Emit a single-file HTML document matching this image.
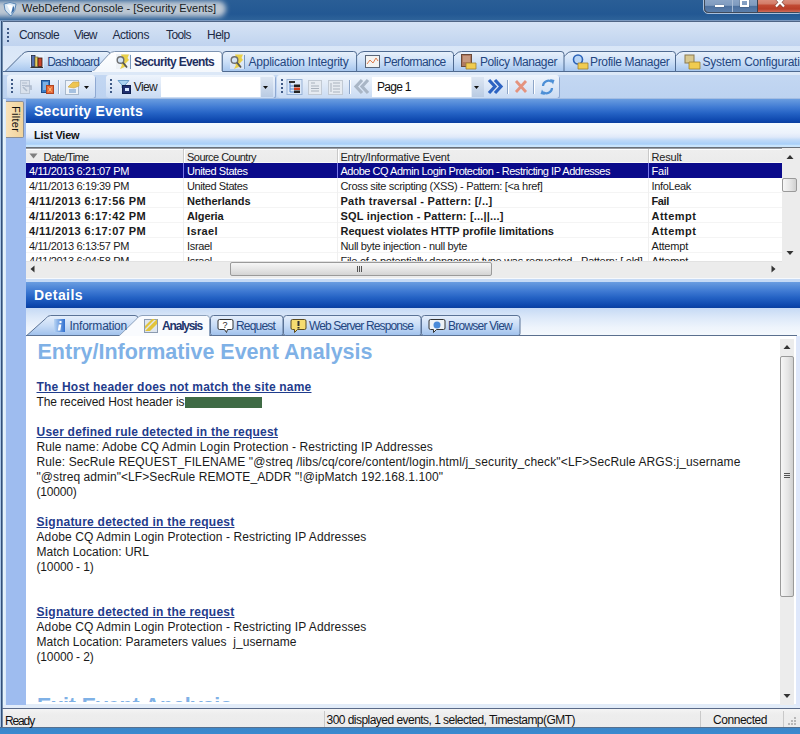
<!DOCTYPE html><html><head><meta charset='utf-8'><style>
*{box-sizing:border-box;margin:0;padding:0}
html,body{width:800px;height:734px;overflow:hidden;background:#c2d5f0;font-family:"Liberation Sans",sans-serif;position:relative}
.a{position:absolute}
.t{position:absolute;white-space:pre;line-height:1}
.grip{width:2px;background:repeating-linear-gradient(#3f5a86 0 2px,transparent 2px 4px)}
</style></head><body>
<div class="a" style="left:0;top:0;width:800px;height:20px;background:linear-gradient(#2a5e96,#235893 70%,#2d6299)"></div>
<div class="a" style="left:-12px;top:1px;width:238px;height:16px;border-radius:8px;background:#bcc7d3;filter:blur(2.5px)"></div>
<svg class="a" style="left:2px;top:1px" width="16" height="16" viewBox="0 0 16 16"><path d="M2 3 Q8 0 14 3 Q14 10 9 15 Q6 13 3 9 Z" fill="#d9e8f5" stroke="#5a86b5" stroke-width="1"/><path d="M5 4 Q8 3 11 5 L9 12 Z" fill="#ffffff"/><path d="M11 5 Q13 6 12 10 L9 13 Z" fill="#3d6ea8"/></svg>
<div class="t" style="left:22px;top:3px;font-size:11px;font-weight:normal;color:#151a22;letter-spacing:0.010px">WebDefend Console - [Security Events]</div>
<div class="a" style="left:703px;top:-3px;width:100px;height:17px;border:1px solid #a9c0dc;border-radius:0 0 5px 5px;background:#3f4a5a"></div>
<div class="a" style="left:705px;top:0;width:28px;height:12px;background:linear-gradient(#8aa4c6 0%,#7f9bbf 45%,#4d709e 50%,#5a7eab 100%);border-right:1px solid #a9bcd6;border-radius:0 0 0 4px"></div>
<div class="a" style="left:715px;top:5px;width:9px;height:2px;background:#fff;box-shadow:0 0 1px #333"></div>
<div class="a" style="left:733px;top:0;width:24px;height:12px;background:linear-gradient(#8aa4c6 0%,#7f9bbf 45%,#4d709e 50%,#5a7eab 100%)"></div>
<div class="a" style="left:740px;top:-2px;width:9px;height:9px;border:2px solid #fff;border-top-width:3px;box-shadow:0 0 1px #333"></div>
<div class="a" style="left:757px;top:0;width:43px;height:12px;background:linear-gradient(#da8c7a 0%,#d27a66 35%,#c24c35 40%,#b93e28 75%,#cf6e5c 100%);border-left:1px solid #3a4454"></div>
<svg class="a" style="left:774px;top:-2px" width="12" height="10"><path d="M2 0 L10 8.5 M10 0 L2 8.5" stroke="#3a2a2a" stroke-width="3.6" opacity="0.45"/><path d="M2 0 L10 8.5 M10 0 L2 8.5" stroke="#fff" stroke-width="2.2"/></svg>
<div class="a" style="left:0;top:20px;width:800px;height:1px;background:#7c99bf"></div>
<div class="a" style="left:0;top:21px;width:800px;height:1px;background:#4f6585"></div>
<div class="a" style="left:3px;top:22px;width:797px;height:24px;background:linear-gradient(#d6e3f5,#c9daf1 60%,#c0d3ef)"></div>
<div class="a" style="left:3px;top:46px;width:797px;height:26px;background:linear-gradient(#d9e6f7,#dfeaf8)"></div>
<div class="a grip" style="left:7px;top:28px;height:14px"></div>
<div class="t" style="left:19px;top:29px;font-size:12px;font-weight:normal;color:#1e2b45;letter-spacing:-0.576px">Console</div>
<div class="t" style="left:74px;top:29px;font-size:12px;font-weight:normal;color:#1e2b45;letter-spacing:-0.774px">View</div>
<div class="t" style="left:112.4px;top:29px;font-size:12px;font-weight:normal;color:#1e2b45;letter-spacing:-0.394px">Actions</div>
<div class="t" style="left:166px;top:29px;font-size:12px;font-weight:normal;color:#1e2b45;letter-spacing:-0.603px">Tools</div>
<div class="t" style="left:207px;top:29px;font-size:12px;font-weight:normal;color:#1e2b45;letter-spacing:-0.522px">Help</div>
<svg class="a" style="left:0;top:0" width="800" height="100"><defs><linearGradient id="tg" x1="0" y1="0" x2="0" y2="1"><stop offset="0" stop-color="#e9f1fb"/><stop offset="0.5" stop-color="#cde0f7"/><stop offset="1" stop-color="#a6c6ee"/></linearGradient><linearGradient id="tsel" x1="0" y1="0" x2="0" y2="1"><stop offset="0" stop-color="#ffffff"/><stop offset="1" stop-color="#f3f7fc"/></linearGradient></defs><rect x="3" y="71" width="797" height="1" fill="#4f6c96"/><path d="M660,71.5 L677,54.5 Q679.5,51.5 683,51.5 L827,51.5 Q830,51.5 830,54.5 L830,71.5 Z" fill="url(#tg)" stroke="#4f6a90" stroke-width="1"/><path d="M549,71.5 L566,54.5 Q568.5,51.5 572,51.5 L672.5,51.5 Q675.5,51.5 675.5,54.5 L675.5,71.5 Z" fill="url(#tg)" stroke="#4f6a90" stroke-width="1"/><path d="M438.5,71.5 L455.5,54.5 Q458.0,51.5 461.5,51.5 L561,51.5 Q564,51.5 564,54.5 L564,71.5 Z" fill="url(#tg)" stroke="#4f6a90" stroke-width="1"/><path d="M341,71.5 L358,54.5 Q360.5,51.5 364,51.5 L450.5,51.5 Q453.5,51.5 453.5,54.5 L453.5,71.5 Z" fill="url(#tg)" stroke="#4f6a90" stroke-width="1"/><path d="M222.5,71.5 L222.5,55 Q222.5,51.5 226,51.5 L353.6,51.5 Q356.6,51.5 356.6,54.5 L356.6,71.5 Z" fill="url(#tg)" stroke="#4f6a90" stroke-width="1"/><path d="M5,71.5 L22,54.5 Q24.5,51.5 28,51.5 L107,51.5 Q110,51.5 110,54.5 L110,71.5 Z" fill="url(#tg)" stroke="#4f6a90" stroke-width="1"/><path d="M91.6,73 L108.6,54.5 Q111.1,51.5 114.6,51.5 L219,51.5 Q222,51.5 222,54.5 L222,73 Z" fill="url(#tsel)" stroke="none"/><path d="M91.6,73 L108.6,54.5 Q111.1,51.5 114.6,51.5 L219,51.5 Q222,51.5 222,54.5 L222,73" fill="none" stroke="#7d93b1" stroke-width="1"/><rect x="92" y="71" width="130" height="2" fill="#f5f8fc"/></svg>
<div class="t" style="left:47.2px;top:56px;font-size:12px;font-weight:normal;color:#24467f;letter-spacing:-0.747px">Dashboard</div>
<div class="t" style="left:134px;top:56px;font-size:12px;font-weight:bold;color:#1f2f5f;letter-spacing:-0.670px">Security Events</div>
<div class="t" style="left:248.5px;top:56px;font-size:12px;font-weight:normal;color:#24467f;letter-spacing:-0.225px">Application Integrity</div>
<div class="t" style="left:383.6px;top:56px;font-size:12px;font-weight:normal;color:#24467f;letter-spacing:-0.609px">Performance</div>
<div class="t" style="left:480px;top:56px;font-size:12px;font-weight:normal;color:#24467f;letter-spacing:-0.408px">Policy Manager</div>
<div class="t" style="left:590px;top:56px;font-size:12px;font-weight:normal;color:#24467f;letter-spacing:-0.348px">Profile Manager</div>
<div class="t" style="left:702.5px;top:56px;font-size:12px;font-weight:normal;color:#24467f;letter-spacing:-0.237px">System Configuration</div>
<div class="a" style="left:3px;top:72px;width:797px;height:27px;background:linear-gradient(#dce8f7 0,#dce8f7 3px,#c3d7f2 3px,#bcd2f0)"></div>
<div class="a" style="left:7px;top:75px;width:87.5px;height:23px;border-radius:3px;background:linear-gradient(#eef4fc,#dde8f7 50%,#c9dbf3);box-shadow:1px 1px 0 #8fa9d2"></div>
<div class="a" style="left:106px;top:75px;width:169px;height:23px;border-radius:3px;background:linear-gradient(#eef4fc,#dde8f7 50%,#c9dbf3);box-shadow:1px 1px 0 #8fa9d2"></div>
<div class="a" style="left:276.6px;top:75px;width:282.4px;height:23px;border-radius:3px;background:linear-gradient(#eef4fc,#dde8f7 50%,#c9dbf3);box-shadow:1px 1px 0 #8fa9d2"></div>
<div class="a grip" style="left:11px;top:79px;height:14px"></div>
<div class="a grip" style="left:109.7px;top:79px;height:14px"></div>
<div class="a grip" style="left:280.5px;top:79px;height:14px"></div>
<div class="a" style="left:161px;top:77px;width:112px;height:20px;background:#fff"></div>
<div class="a" style="left:260px;top:77px;width:13px;height:20px;background:linear-gradient(#dde6f2,#b9cbe3);border-left:1px solid #e6edf6"></div>
<svg class="a" style="left:263px;top:86px" width="6" height="4"><path d="M0 0 L5 0 L2.5 3 Z" fill="#111"/></svg>
<div class="a" style="left:372px;top:77px;width:112px;height:20px;background:#fff"></div>
<div class="a" style="left:471px;top:77px;width:13px;height:20px;background:linear-gradient(#dde6f2,#b9cbe3);border-left:1px solid #e6edf6"></div>
<svg class="a" style="left:474px;top:86px" width="6" height="4"><path d="M0 0 L5 0 L2.5 3 Z" fill="#111"/></svg>
<div class="t" style="left:133.75px;top:81px;font-size:12px;font-weight:normal;color:#222;letter-spacing:-0.637px">View</div>
<div class="t" style="left:377px;top:81px;font-size:12px;font-weight:normal;color:#111;letter-spacing:-0.724px">Page 1</div>
<div class="a" style="left:58.0px;top:80px;width:1px;height:14px;background:#8ea6c8;box-shadow:1px 0 0 #fff"></div>
<div class="a" style="left:348.5px;top:80px;width:1px;height:14px;background:#8ea6c8;box-shadow:1px 0 0 #fff"></div>
<div class="a" style="left:507.0px;top:80px;width:1px;height:14px;background:#8ea6c8;box-shadow:1px 0 0 #fff"></div>
<div class="a" style="left:533.0px;top:80px;width:1px;height:14px;background:#8ea6c8;box-shadow:1px 0 0 #fff"></div>
<svg class="a" style="left:0;top:0" width="800" height="100">
<!-- icon1 disabled -->
<rect x="20.5" y="80.5" width="9" height="13" fill="#d9e1ec" stroke="#b9c5d5"/>
<path d="M22 83 H27 M22 85.5 H25" stroke="#b0bccc"/>
<path d="M23 87 L27 91 M25 86 L31 86 L31 90" fill="none" stroke="#aebbcc" stroke-width="1.6"/>
<!-- icon2 -->
<rect x="41.5" y="80.5" width="8" height="12" fill="#3a7fc8" stroke="#1f4f8f"/>
<path d="M43 83 H48 M43 85 H48 M43 87 H48 M43 89 H48" stroke="#bfe0ff" stroke-width="1"/>
<rect x="46.5" y="85.5" width="7" height="8" fill="#e86a3a" stroke="#b04520"/>
<path d="M48.5 87.5 L51.5 91.5 M51.5 87.5 L48.5 91.5" stroke="#ffd080" stroke-width="1"/>
<!-- icon3 -->
<rect x="65.5" y="80.5" width="13" height="14" fill="#eef3f9" stroke="#a9b9cc"/>
<path d="M69 90 H76 M69 92 H76" stroke="#5f8fc8" stroke-width="1.2"/>
<path d="M68 87 L73 82 L79 82 L79 86 L74 88 Z" fill="#eec550" stroke="#c8a040" stroke-width="0.6"/>
<path d="M84 86 L89 86 L86.5 89 Z" fill="#111"/>
<!-- filter icon -->
<path d="M118 80.5 L129 80.5 L125 85 L125 88 L122 88 L122 85 Z" fill="#a9d2f0" stroke="#6a9cc8" stroke-width="1"/>
<rect x="122.5" y="85.5" width="8" height="8" fill="#1f2f6f" stroke="#0f1f4f"/>
<rect x="125" y="88" width="4" height="3" fill="#d8e8ff"/>
<!-- tree icon -->
<rect x="287" y="79.5" width="15" height="15" fill="#dce8f7" stroke="#98b2d6"/>
<rect x="289" y="81" width="6" height="2" fill="#333"/>
<path d="M290 83 V92 M290 86 H294 M290 89 H294 M290 92 H294" stroke="#5a8ad0" stroke-width="1"/>
<rect x="294" y="84.5" width="6" height="2.5" fill="#222"/>
<rect x="294" y="87.5" width="6" height="2.5" fill="#d04020"/>
<rect x="294" y="90.5" width="6" height="2.5" fill="#222"/>
<!-- greyed doc icons -->
<rect x="308.5" y="80.5" width="13" height="14" fill="#e6ebf1" stroke="#c2cad4"/>
<path d="M311 83 H315 M311 86 H319 M311 88.5 H319 M311 91 H319" stroke="#a9b2bd" stroke-width="1"/>
<rect x="328.5" y="80.5" width="14" height="14" fill="#e6ebf1" stroke="#c2cad4"/>
<path d="M331 83 V92 M333 83 H340 M333 86 H340 M333 89 H340 M333 92 H340" stroke="#a9b2bd" stroke-width="1"/>
<!-- << disabled -->
<path d="M362 80 L356 86.5 L362 93 M368 80 L362 86.5 L368 93" fill="none" stroke="#a9b6c6" stroke-width="3.2"/>
<!-- >> blue -->
<path d="M489 80 L495 86.5 L489 93 M495 80 L501 86.5 L495 93" fill="none" stroke="#2d63c2" stroke-width="3.2"/>
<!-- X -->
<path d="M516 81 L526 92 M526 81 L516 92" stroke="#e4937e" stroke-width="2.8"/>
<!-- refresh -->
<path d="M543 86 A5.5 5.5 0 0 1 552 82" fill="none" stroke="#4d8fd6" stroke-width="2.2"/>
<path d="M552 88 A5.5 5.5 0 0 1 543 92" fill="none" stroke="#4d8fd6" stroke-width="2.2"/>
<path d="M550 79 L554.5 80 L553 84.5 Z" fill="#4d8fd6"/>
<path d="M545 95 L540.5 94 L542 89.5 Z" fill="#4d8fd6"/>
</svg>
<svg class="a" style="left:0;top:0" width="800" height="100">
<!-- dashboard -->
<rect x="30" y="54.5" width="14" height="14" fill="#f4f7fb" opacity="0.6"/>
<rect x="31.5" y="55.5" width="3.5" height="11" fill="#5570b0" stroke="#222a40" stroke-width="0.8"/>
<rect x="35" y="57" width="3" height="9.5" fill="#e6cf5a" stroke="#665c30" stroke-width="0.6"/>
<rect x="38" y="58" width="4" height="8.5" fill="#c8452c" stroke="#3a1a10" stroke-width="0.8"/>
<path d="M30.5 67.5 H43" stroke="#333" stroke-width="1"/>
<!-- security events -->
<g transform="translate(115,54)">
<rect x="1" y="0" width="15" height="15" fill="#eef2f6"/>
<path d="M15.5 1 V15" stroke="#7a9ac0"/>
<path d="M6 0.5 L14 0.5 L12.5 4 L14 6 L10 10 L12 12 L5 15 L7 11 L5 9 L8 6 Z" fill="#e9d048"/>
<circle cx="5.5" cy="6" r="3.3" fill="#d4e4f4" stroke="#6f6f6f" stroke-width="1.4"/>
<path d="M8 8.5 L12 13.5" stroke="#555" stroke-width="1.8"/>
</g>
<!-- app integrity -->
<g transform="translate(229,54)">
<rect x="1" y="0" width="15" height="15" fill="#e8eef6" opacity="0.7"/>
<path d="M15.5 1 V15" stroke="#7a9ac0"/>
<path d="M6 0.5 L14 0.5 L12.5 4 L14 6 L10 10 L12 12 L5 15 L7 11 L5 9 L8 6 Z" fill="#e9d048"/>
<circle cx="5.5" cy="6" r="3.3" fill="#d4e4f4" stroke="#6f6f6f" stroke-width="1.4"/>
<path d="M8 8.5 L12 13.5" stroke="#555" stroke-width="1.8"/>
</g>
<!-- performance -->
<g transform="translate(365,55)">
<rect x="0.5" y="0.5" width="14" height="12" fill="#f4f4f2" stroke="#5a6678"/>
<path d="M2 9 L5 5 L8 8 L11 3 L13 6" fill="none" stroke="#e08050" stroke-width="1"/>
</g>
<!-- policy manager -->
<g transform="translate(461,54)">
<rect x="0.5" y="0.5" width="10" height="12" fill="#b07a60" stroke="#6a4a3a"/>
<path d="M2 3 H9 M2 5 H9 M2 7 H9" stroke="#e8c8b0" stroke-width="0.8"/>
<path d="M5 9 H15 V15 H5 Z" fill="#f0cc50" stroke="#a08030" stroke-width="0.8"/>
</g>
<!-- profile manager -->
<g transform="translate(572,54)">
<circle cx="6" cy="5.5" r="4.5" fill="#b8d4f4" stroke="#2a62b8" stroke-width="1.6"/>
<path d="M6 9 H16 V15 H6 Z" fill="#f0cc50" stroke="#a08030" stroke-width="0.8"/>
</g>
<!-- system config -->
<g transform="translate(684,54)">
<rect x="1" y="1" width="9" height="8" fill="#d8c890" stroke="#8a7a50"/>
<path d="M5 8 H16 V15 H5 Z" fill="#f0cc50" stroke="#a08030" stroke-width="0.8"/>
</g>
</svg>
<div class="a" style="left:3px;top:98px;width:797px;height:1px;background:#a3bde3"></div>
<div class="a" style="left:0;top:21px;width:1px;height:713px;background:#a9c6e6"></div>
<div class="a" style="left:1px;top:21px;width:1px;height:713px;background:#34507a"></div><div class="a" style="left:2px;top:21px;width:1px;height:713px;background:#6f8cab"></div>
<div class="a" style="left:3px;top:99px;width:3px;height:610px;background:linear-gradient(90deg,#e9f6fc,#dbe9f8)"></div>
<div class="a" style="left:6px;top:99px;width:20px;height:606px;background:#9ebcef"></div>
<div class="a" style="left:26px;top:99px;width:774px;height:24px;background:linear-gradient(#6a9de0 0%,#3f7ad3 35%,#2462c4 60%,#0d47ae 90%,#0a3f9f 100%)"></div>
<div class="t" style="left:34px;top:104px;font-size:14px;font-weight:bold;color:#fff;letter-spacing:0.263px">Security Events</div>
<div class="a" style="left:26px;top:123px;width:774px;height:25px;background:linear-gradient(#f4fbff 0,#ecf2fb 40%,#dfe9f9 56%,#c0daf8 68%,#a9cff8 84%,#b4d8fa 87%,#c9e4fc 90%,#c9e4fc 100%)"></div>
<div class="t" style="left:34px;top:130px;font-size:11px;font-weight:bold;color:#111;letter-spacing:-0.232px">List View</div>
<div class="a" style="left:26px;top:147px;width:774px;height:1px;background:#6a7078"></div>
<div class="a" style="left:26px;top:148px;width:774px;height:113px;background:#fff"></div>
<div class="a" style="left:26px;top:148px;width:774px;height:1px;background:#9a9ea4"></div><div class="a" style="left:26px;top:149px;width:756px;height:14px;background:linear-gradient(#ffffff 0,#ffffff 1px,#eeeeee 1px,#ebebeb 13px,#f8f8f8 13px)"></div>
<div class="a" style="left:26px;top:163px;width:756px;height:15px;background:#0a0a8a"></div>
<div class="a" style="left:26px;top:192px;width:756px;height:1px;background:#f4f4f4"></div>
<div class="a" style="left:26px;top:207px;width:756px;height:1px;background:#f4f4f4"></div>
<div class="a" style="left:26px;top:222px;width:756px;height:1px;background:#f4f4f4"></div>
<div class="a" style="left:26px;top:237px;width:756px;height:1px;background:#f4f4f4"></div>
<div class="a" style="left:26px;top:252px;width:756px;height:1px;background:#f4f4f4"></div>
<div class="a" style="left:26px;top:267px;width:756px;height:1px;background:#f4f4f4"></div>
<div class="a" style="left:182.5px;top:149px;width:1px;height:14px;background:#c9c9c9"></div>
<div class="a" style="left:183.5px;top:150px;width:1px;height:13px;background:#ffffff"></div>
<div class="a" style="left:182.5px;top:163px;width:1px;height:15px;background:#7878e8"></div>
<div class="a" style="left:182.5px;top:178px;width:1px;height:83px;background:#f0f0f0"></div>
<div class="a" style="left:337.0px;top:149px;width:1px;height:14px;background:#c9c9c9"></div>
<div class="a" style="left:338.0px;top:150px;width:1px;height:13px;background:#ffffff"></div>
<div class="a" style="left:337.0px;top:163px;width:1px;height:15px;background:#7878e8"></div>
<div class="a" style="left:337.0px;top:178px;width:1px;height:83px;background:#f0f0f0"></div>
<div class="a" style="left:648.1px;top:149px;width:1px;height:14px;background:#c9c9c9"></div>
<div class="a" style="left:649.1px;top:150px;width:1px;height:13px;background:#ffffff"></div>
<div class="a" style="left:648.1px;top:163px;width:1px;height:15px;background:#7878e8"></div>
<div class="a" style="left:648.1px;top:178px;width:1px;height:83px;background:#f0f0f0"></div>
<svg class="a" style="left:29px;top:153px" width="10" height="6"><path d="M0.5 0.5 L8.5 0.5 L4.5 5.5 Z" fill="#7f7f7f"/></svg>
<div class="t" style="left:43.6px;top:152px;font-size:11px;font-weight:normal;color:#222;letter-spacing:-0.592px">Date/Time</div>
<div class="t" style="left:187px;top:152px;font-size:11px;font-weight:normal;color:#222;letter-spacing:-0.531px">Source Country</div>
<div class="t" style="left:340.5px;top:152px;font-size:11px;font-weight:normal;color:#222;letter-spacing:-0.232px">Entry/Informative Event</div>
<div class="t" style="left:651.5px;top:152px;font-size:11px;font-weight:normal;color:#222;letter-spacing:-0.198px">Result</div>
<div class="t" style="left:29px;top:166px;font-size:11px;font-weight:normal;color:#ffffff;letter-spacing:-0.372px">4/11/2013 6:21:07 PM</div>
<div class="t" style="left:187px;top:166px;font-size:11px;font-weight:normal;color:#ffffff;letter-spacing:-0.427px">United States</div>
<div class="t" style="left:340.5px;top:166px;font-size:11px;font-weight:normal;color:#ffffff;letter-spacing:-0.473px">Adobe CQ Admin Login Protection - Restricting IP Addresses</div>
<div class="t" style="left:651.5px;top:166px;font-size:11px;font-weight:normal;color:#ffffff;letter-spacing:-0.184px">Fail</div>
<div class="t" style="left:29px;top:181px;font-size:11px;font-weight:normal;color:#1a1a1a;letter-spacing:-0.372px">4/11/2013 6:19:39 PM</div>
<div class="t" style="left:187px;top:181px;font-size:11px;font-weight:normal;color:#1a1a1a;letter-spacing:-0.427px">United States</div>
<div class="t" style="left:340.5px;top:181px;font-size:11px;font-weight:normal;color:#1a1a1a;letter-spacing:-0.326px">Cross site scripting (XSS) - Pattern: [&lt;a href]</div>
<div class="t" style="left:651.5px;top:181px;font-size:11px;font-weight:normal;color:#1a1a1a;letter-spacing:-0.338px">InfoLeak</div>
<div class="t" style="left:29px;top:196px;font-size:11px;font-weight:bold;color:#1a1a1a;letter-spacing:0.407px">4/11/2013 6:17:56 PM</div>
<div class="t" style="left:187px;top:196px;font-size:11px;font-weight:bold;color:#1a1a1a;letter-spacing:-0.007px">Netherlands</div>
<div class="t" style="left:340.5px;top:196px;font-size:11px;font-weight:bold;color:#1a1a1a;letter-spacing:0.269px">Path traversal - Pattern: [/..]</div>
<div class="t" style="left:651.5px;top:196px;font-size:11px;font-weight:bold;color:#1a1a1a;letter-spacing:-0.363px">Fail</div>
<div class="t" style="left:29px;top:211px;font-size:11px;font-weight:bold;color:#1a1a1a;letter-spacing:0.407px">4/11/2013 6:17:42 PM</div>
<div class="t" style="left:187px;top:211px;font-size:11px;font-weight:bold;color:#1a1a1a;letter-spacing:-0.114px">Algeria</div>
<div class="t" style="left:340.5px;top:211px;font-size:11px;font-weight:bold;color:#1a1a1a;letter-spacing:0.174px">SQL injection - Pattern: [...||...]</div>
<div class="t" style="left:651.5px;top:211px;font-size:11px;font-weight:bold;color:#1a1a1a;letter-spacing:0.491px">Attempt</div>
<div class="t" style="left:29px;top:226px;font-size:11px;font-weight:bold;color:#1a1a1a;letter-spacing:0.407px">4/11/2013 6:17:07 PM</div>
<div class="t" style="left:187px;top:226px;font-size:11px;font-weight:bold;color:#1a1a1a;letter-spacing:0.375px">Israel</div>
<div class="t" style="left:340.5px;top:226px;font-size:11px;font-weight:bold;color:#1a1a1a;letter-spacing:-0.006px">Request violates HTTP profile limitations</div>
<div class="t" style="left:651.5px;top:226px;font-size:11px;font-weight:bold;color:#1a1a1a;letter-spacing:0.491px">Attempt</div>
<div class="t" style="left:29px;top:241px;font-size:11px;font-weight:normal;color:#1a1a1a;letter-spacing:-0.372px">4/11/2013 6:13:57 PM</div>
<div class="t" style="left:187px;top:241px;font-size:11px;font-weight:normal;color:#1a1a1a;letter-spacing:-0.318px">Israel</div>
<div class="t" style="left:340.5px;top:241px;font-size:11px;font-weight:normal;color:#1a1a1a;letter-spacing:-0.338px">Null byte injection - null byte</div>
<div class="t" style="left:651.5px;top:241px;font-size:11px;font-weight:normal;color:#1a1a1a;letter-spacing:-0.201px">Attempt</div>
<div class="t" style="left:29px;top:256px;font-size:11px;font-weight:normal;color:#1a1a1a;letter-spacing:-0.372px">4/11/2013 6:04:58 PM</div>
<div class="t" style="left:187px;top:256px;font-size:11px;font-weight:normal;color:#1a1a1a;letter-spacing:-0.318px">Israel</div>
<div class="t" style="left:340.5px;top:256px;font-size:11px;font-weight:normal;color:#1a1a1a;letter-spacing:-0.271px">File of a potentially dangerous type was requested - Pattern: [.old]</div>
<div class="t" style="left:651.5px;top:256px;font-size:11px;font-weight:normal;color:#1a1a1a;letter-spacing:-0.201px">Attempt</div>
<div class="a" style="left:26px;top:278px;width:774px;height:4px;background:linear-gradient(#f6f9fd 0,#f6f9fd 1px,#c6daf5 1px)"></div>
<div class="a" style="left:26px;top:282px;width:774px;height:26px;background:linear-gradient(#6a9de0 0%,#3f7ad3 35%,#2462c4 60%,#0d47ae 90%,#0a3f9f 100%)"></div>
<div class="t" style="left:34px;top:288px;font-size:14px;font-weight:bold;color:#fff;letter-spacing:0.440px">Details</div>
<div class="a" style="left:26px;top:308px;width:774px;height:28px;background:linear-gradient(#c6daf5,#dde9f9 35%,#eef4fc 70%,#f5f9fd)"></div>
<div class="a" style="left:26px;top:336px;width:770px;height:369px;background:#fff"></div>
<svg class="a" style="left:0;top:0" width="800" height="400"><defs><linearGradient id="dg" x1="0" y1="0" x2="0" y2="1"><stop offset="0" stop-color="#e6effb"/><stop offset="0.5" stop-color="#c8dcf6"/><stop offset="1" stop-color="#a0c1ec"/></linearGradient><linearGradient id="ig" x1="0" y1="0" x2="1" y2="0"><stop offset="0" stop-color="#b8d4f4"/><stop offset="1" stop-color="#2f6fd0"/></linearGradient></defs><rect x="26" y="335" width="771" height="1" fill="#5a6f8e"/><path d="M421.5,333.5 L421.5,318.5 Q421.5,315.5 424.5,315.5 L517,315.5 Q520,315.5 520,318.5 L520,333.5 Q520,335.5 518,335.5 L423.5,335.5 Q421.5,335.5 421.5,333.5 Z" fill="url(#dg)" stroke="#5b7396" stroke-width="1"/><path d="M283.5,333.5 L283.5,318.5 Q283.5,315.5 286.5,315.5 L418,315.5 Q421,315.5 421,318.5 L421,333.5 Q421,335.5 419,335.5 L285.5,335.5 Q283.5,335.5 283.5,333.5 Z" fill="url(#dg)" stroke="#5b7396" stroke-width="1"/><path d="M210.5,333.5 L210.5,318.5 Q210.5,315.5 213.5,315.5 L280,315.5 Q283,315.5 283,318.5 L283,333.5 Q283,335.5 281,335.5 L212.5,335.5 Q210.5,335.5 210.5,333.5 Z" fill="url(#dg)" stroke="#5b7396" stroke-width="1"/><path d="M26.75,335.5 L45.75,318.5 Q47.75,315.5 50.75,315.5 L135,315.5 Q138,315.5 138,318.5 L138,335.5 Z" fill="url(#dg)" stroke="#5b7396" stroke-width="1"/><path d="M118,337 L137,318.5 Q139,315.5 142,315.5 L206.5,315.5 Q209.5,315.5 209.5,318.5 L209.5,337 Z" fill="#f9fbfe" stroke="none"/><path d="M118,337 L137,318.5 Q139,315.5 142,315.5 L206.5,315.5 Q209.5,315.5 209.5,318.5 L209.5,337" fill="none" stroke="#8ea2bd" stroke-width="1"/><rect x="100" y="336" width="120" height="3" fill="#ffffff"/><rect x="54" y="319" width="11" height="13" fill="url(#ig)"/><path d="M59.5 321 h2 v2 h-2 Z M58.8 324.5 h2.5 l-1 6 h-2.5 Z" fill="#fff"/><rect x="144.5" y="319.5" width="13" height="13" fill="#dfe6ee" stroke="#8c9bb0"/><path d="M145 331 L157 319 L157 324 L150 331 Z M145 326 L152 319 L155 319 L145 329 Z" fill="#e2c43a"/><path d="M219.5 319.5 h12 a1.5 1.5 0 0 1 1.5 1.5 v7 a1.5 1.5 0 0 1 -1.5 1.5 h-4 l-1 3 l-2 -3 h-5 a1.5 1.5 0 0 1 -1.5 -1.5 v-7 a1.5 1.5 0 0 1 1.5 -1.5 Z" fill="#fff" stroke="#333" stroke-width="1"/><text x="222.5" y="328" font-family="Liberation Sans" font-size="9" fill="#222">?</text><path d="M292.5 319.5 h12 a1.5 1.5 0 0 1 1.5 1.5 v7 a1.5 1.5 0 0 1 -1.5 1.5 h-7 l-3 3 v-3 h-2 a1.5 1.5 0 0 1 -1.5 -1.5 v-7 a1.5 1.5 0 0 1 1.5 -1.5 Z" fill="#f6dc70" stroke="#5a4a20" stroke-width="1"/><rect x="297.5" y="321" width="2" height="5" fill="#333"/><rect x="297.5" y="327" width="2" height="1.5" fill="#333"/><path d="M430.5 319.5 h13 a1.5 1.5 0 0 1 1.5 1.5 v7 a1.5 1.5 0 0 1 -1.5 1.5 h-7 l-3 3 v-3 h-3 a1.5 1.5 0 0 1 -1.5 -1.5 v-7 a1.5 1.5 0 0 1 1.5 -1.5 Z" fill="#eef2f6" stroke="#333" stroke-width="1"/><circle cx="437" cy="325" r="3.5" fill="#4a8ad8"/></svg>
<div class="t" style="left:69.5px;top:320px;font-size:12px;font-weight:normal;color:#24467f;letter-spacing:-0.230px">Information</div>
<div class="t" style="left:162px;top:320px;font-size:12px;font-weight:bold;color:#22356b;letter-spacing:-1.170px">Analysis</div>
<div class="t" style="left:236px;top:320px;font-size:12px;font-weight:normal;color:#24467f;letter-spacing:-0.815px">Request</div>
<div class="t" style="left:309px;top:320px;font-size:12px;font-weight:normal;color:#24467f;letter-spacing:-0.869px">Web Server Response</div>
<div class="t" style="left:448px;top:320px;font-size:12px;font-weight:normal;color:#24467f;letter-spacing:-0.762px">Browser View</div>
<div class="t" style="left:37.5px;top:342px;font-size:21.5px;font-weight:bold;color:#7fb1e6;letter-spacing:0.001px">Entry/Informative Event Analysis</div>
<div class="t" style="left:36.5px;top:381px;font-size:12px;font-weight:bold;color:#1f3c8c;letter-spacing:0.203px;text-decoration:underline">The Host header does not match the site name</div>
<div class="t" style="left:36.5px;top:396px;font-size:12px;font-weight:normal;color:#1a1a1a;letter-spacing:-0.077px">The received Host header is</div>
<div class="a" style="left:185px;top:397px;width:77px;height:11px;background:#3f6b45"></div>
<div class="t" style="left:36.5px;top:426px;font-size:12px;font-weight:bold;color:#1f3c8c;letter-spacing:0.214px;text-decoration:underline">User defined rule detected in the request</div>
<div class="t" style="left:36.5px;top:441px;font-size:12px;font-weight:normal;color:#1a1a1a;letter-spacing:0.123px">Rule name: Adobe CQ Admin Login Protection - Restricting IP Addresses</div>
<div class="t" style="left:36.5px;top:456px;font-size:12px;font-weight:normal;color:#1a1a1a;letter-spacing:0.135px">Rule: SecRule REQUEST_FILENAME "@streq /libs/cq/core/content/login.html/j_security_check"&lt;LF&gt;SecRule ARGS:j_username</div>
<div class="t" style="left:36.5px;top:471px;font-size:12px;font-weight:normal;color:#1a1a1a;letter-spacing:0.078px">"@streq admin"&lt;LF&gt;SecRule REMOTE_ADDR "!@ipMatch 192.168.1.100"</div>
<div class="t" style="left:36.5px;top:486px;font-size:12px;font-weight:normal;color:#1a1a1a;letter-spacing:-0.196px">(10000)</div>
<div class="t" style="left:36.5px;top:516px;font-size:12px;font-weight:bold;color:#1f3c8c;letter-spacing:0.241px;text-decoration:underline">Signature detected in the request</div>
<div class="t" style="left:36.5px;top:531px;font-size:12px;font-weight:normal;color:#1a1a1a;letter-spacing:0.104px">Adobe CQ Admin Login Protection - Restricting IP Addresses</div>
<div class="t" style="left:36.5px;top:546px;font-size:12px;font-weight:normal;color:#1a1a1a;letter-spacing:0.023px">Match Location: URL</div>
<div class="t" style="left:36.5px;top:561px;font-size:12px;font-weight:normal;color:#1a1a1a;letter-spacing:-0.155px">(10000 - 1)</div>
<div class="t" style="left:36.5px;top:606px;font-size:12px;font-weight:bold;color:#1f3c8c;letter-spacing:0.241px;text-decoration:underline">Signature detected in the request</div>
<div class="t" style="left:36.5px;top:621px;font-size:12px;font-weight:normal;color:#1a1a1a;letter-spacing:0.104px">Adobe CQ Admin Login Protection - Restricting IP Addresses</div>
<div class="t" style="left:36.5px;top:636px;font-size:12px;font-weight:normal;color:#1a1a1a;letter-spacing:0.056px">Match Location: Parameters values  j_username</div>
<div class="t" style="left:36.5px;top:651px;font-size:12px;font-weight:normal;color:#1a1a1a;letter-spacing:-0.155px">(10000 - 2)</div>
<div class="t" style="left:37px;top:696px;font-size:21.5px;font-weight:bold;color:#7fb1e6;letter-spacing:-0.136px">Exit Event Analysis</div>
<div class="a" style="left:6px;top:101px;width:18px;height:37px;border:1px solid #8a8f98;border-left:none;border-radius:0 2px 2px 0;background:linear-gradient(90deg,#f9e2b8,#f0d39c)"></div>
<div class="t" style="top:106px;font-size:11px;color:#111;transform:rotate(90deg);transform-origin:0 0;left:21px;letter-spacing:0.3px">Filter</div>
<div class="a" style="left:3px;top:705px;width:797px;height:3px;background:#e2ecf9"></div>
<div class="a" style="left:3px;top:709px;width:797px;height:19px;background:linear-gradient(#f4f4f4,#ededed 30%,#ececec)"></div>
<div class="a" style="left:0;top:727px;width:800px;height:1px;background:#55708f"></div><div class="a" style="left:0;top:728px;width:800px;height:6px;background:linear-gradient(#3d86c8,#3a8ad0)"></div>
<div class="t" style="left:5px;top:715px;font-size:12px;font-weight:normal;color:#111;letter-spacing:-1.137px">Ready</div>
<div class="t" style="left:326.5px;top:714px;font-size:12px;font-weight:normal;color:#111;letter-spacing:-0.534px">300 displayed events, 1 selected, Timestamp(GMT)</div>
<div class="t" style="left:713px;top:714px;font-size:12px;font-weight:normal;color:#111;letter-spacing:-0.450px">Connected</div>
<div class="a" style="left:26px;top:261px;width:774px;height:17px;background:#ececec;border-top:1px solid #e2e2e2"></div>
<div class="a" style="left:229.5px;top:262px;width:262px;height:14px;border:1px solid #9a9a9a;border-radius:2px;background:linear-gradient(#f6f6f6,#e6e6e6 50%,#d4d4d4)"></div>
<div class="a" style="left:357px;top:266px;width:5px;height:6px;background:repeating-linear-gradient(90deg,#555 0 1px,transparent 1px 2px)"></div>
<svg class="a" style="left:30px;top:265px" width="6" height="8"><path d="M4.5 0.5 L0.5 4 L4.5 7.5 Z" fill="#333"/></svg>
<svg class="a" style="left:771px;top:265px" width="6" height="8"><path d="M0.5 0.5 L4.5 4 L0.5 7.5 Z" fill="#333"/></svg>
<div class="a" style="left:782px;top:148px;width:18px;height:130px;background:#ececec"></div>
<svg class="a" style="left:786px;top:154px" width="8" height="6"><path d="M0.5 5 L4 1 L7.5 5 Z" fill="#333"/></svg>
<svg class="a" style="left:786px;top:250px" width="8" height="6"><path d="M0.5 1 L4 5 L7.5 1 Z" fill="#333"/></svg>
<div class="a" style="left:782px;top:178px;width:15px;height:14px;border:1px solid #9a9a9a;border-radius:2px;background:linear-gradient(90deg,#f6f6f6,#e4e4e4 60%,#d0d0d0)"></div>
<div class="a" style="left:26px;top:702px;width:754px;height:2px;background:#fff"></div>
<div class="a" style="left:26px;top:704px;width:774px;height:4px;background:#e2ecf9"></div>
<div class="a" style="left:2px;top:708px;width:798px;height:1px;background:#5a6a88"></div>
<div class="a" style="left:780px;top:339px;width:14px;height:366px;background:#ececec"></div>
<div class="a" style="left:796px;top:336px;width:4px;height:370px;background:#dfe8fb"></div>
<svg class="a" style="left:783px;top:344px" width="8" height="6"><path d="M0.5 5 L4 1 L7.5 5 Z" fill="#333"/></svg>
<svg class="a" style="left:783px;top:693px" width="8" height="6"><path d="M0.5 1 L4 5 L7.5 1 Z" fill="#333"/></svg>
<div class="a" style="left:780px;top:356px;width:14px;height:241px;border:1px solid #9a9a9a;border-radius:2px;background:linear-gradient(90deg,#f6f6f6,#e4e4e4 60%,#d0d0d0)"></div>
<div class="a" style="left:784px;top:473px;width:6px;height:5px;background:repeating-linear-gradient(#555 0 1px,transparent 1px 2px)"></div>
<div class="a" style="left:324px;top:711px;width:1px;height:16px;background:#c9c9c9"></div>
<div class="a" style="left:700px;top:711px;width:1px;height:16px;background:#c9c9c9"></div>
<div class="a" style="left:783px;top:711px;width:1px;height:16px;background:#c9c9c9"></div>
<svg class="a" style="left:786px;top:716px" width="12" height="11"><g fill="#b8b8b8"><rect x="8" y="1" width="2" height="2"/><rect x="5" y="4" width="2" height="2"/><rect x="8" y="4" width="2" height="2"/><rect x="2" y="7" width="2" height="2"/><rect x="5" y="7" width="2" height="2"/><rect x="8" y="7" width="2" height="2"/></g></svg>
</body></html>
